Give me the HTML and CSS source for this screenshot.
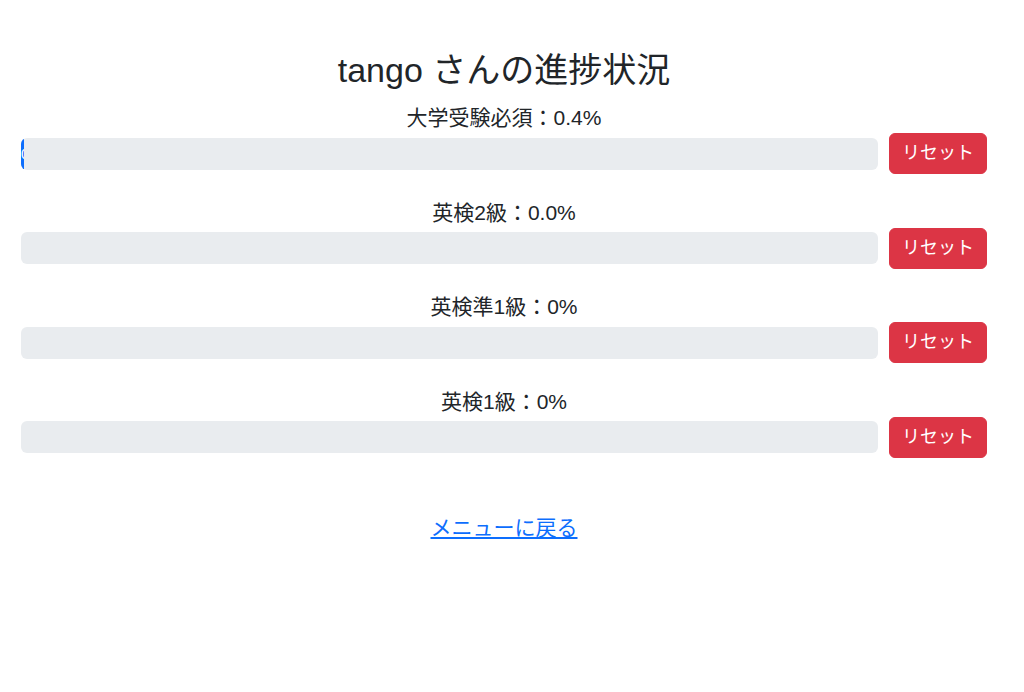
FILE: index.html
```html
<!DOCTYPE html>
<html lang="ja">
<head>
<meta charset="utf-8">
<title>進捗状況</title>
<link rel="stylesheet" href="styles.css">
</head>
<body>
<main class="page">
  <h1 class="title">tango さんの進捗状況</h1>

  <section class="item">
    <div class="label">大学受験必須：0.4%</div>
    <div class="row">
      <div class="progress"><div class="progress-bar" style="width: 0.4%">0.4%</div></div>
      <button class="btn-reset" type="button">リセット</button>
    </div>
  </section>

  <section class="item">
    <div class="label">英検2級：0.0%</div>
    <div class="row">
      <div class="progress"><div class="progress-bar" style="width: 0%"></div></div>
      <button class="btn-reset" type="button">リセット</button>
    </div>
  </section>

  <section class="item">
    <div class="label">英検準1級：0%</div>
    <div class="row">
      <div class="progress"><div class="progress-bar" style="width: 0%"></div></div>
      <button class="btn-reset" type="button">リセット</button>
    </div>
  </section>

  <section class="item">
    <div class="label">英検1級：0%</div>
    <div class="row">
      <div class="progress"><div class="progress-bar" style="width: 0%"></div></div>
      <button class="btn-reset" type="button">リセット</button>
    </div>
  </section>

  <div class="back">
    <a href="#" class="back-link">メニューに戻る</a>
  </div>
</main>
</body>
</html>
```

FILE: styles.css
```css
html, body {
  margin: 0;
  padding: 0;
  background: #fff;
}

body {
  font-family: "Liberation Sans", "Noto Sans CJK JP", sans-serif;
  color: #212529;
}

.page {
  width: 966px;
  padding: 50px 21px 0;
  text-align: center;
}

.title {
  margin: 0 0 10px;
  font-size: 34px;
  font-weight: 400;
  line-height: 41px;
}

.item {
  margin-bottom: 21.5px;
}

.label {
  font-size: 21px;
  line-height: 32px;
  padding-top: 1px;
  margin-bottom: -1px;
}

.row {
  display: flex;
  align-items: center;
  gap: 11px;
}

.progress {
  flex: 1;
  height: 32px;
  background: #e9ecef;
  border-radius: 6px;
  overflow: hidden;
  display: flex;
}

.progress-bar {
  display: flex;
  flex-direction: column;
  justify-content: center;
  overflow: hidden;
  white-space: nowrap;
  text-align: center;
  color: #fff;
  background: #0d6efd;
  font-size: 14px;
}

.btn-reset {
  font-family: "Liberation Sans", "Noto Sans CJK JP", sans-serif;
  font-size: 18px;
  line-height: 27px;
  padding: 6px 12px;
  color: #fff;
  background: #dc3545;
  border: 1px solid #dc3545;
  border-radius: 6px;
  cursor: pointer;
}

.back {
  margin-top: 54px;
  font-size: 21px;
  line-height: 32px;
}

.back-link {
  color: #0d6efd;
  text-decoration: underline;
}
```
